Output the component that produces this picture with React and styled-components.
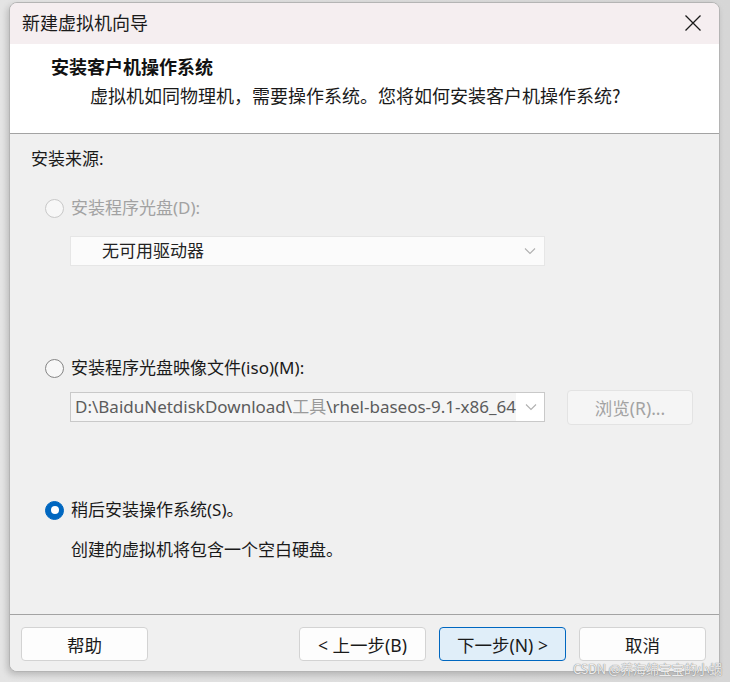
import React from "react";
import styled, { createGlobalStyle } from "styled-components";

const GlobalStyle = createGlobalStyle`
	body {
		margin: 0;
		background: #dcdcdc;
		font-family: "Noto Sans", "Noto Sans CJK SC", sans-serif;
	}
`;

const Page = styled.div`
	position: relative;
	width: 730px;
	height: 682px;
	padding: 2px 0 0 9px;
	box-sizing: border-box;
	background: linear-gradient(90deg, #e4e4e4 0%, #d6d6d6 100%);
	overflow: hidden;
`;

const Window = styled.div`
	width: 711px;
	height: 670px;
	box-sizing: border-box;
	display: flex;
	flex-direction: column;
	border: 1px solid #b4b4b4;
	border-radius: 8px;
	overflow: hidden;
	background: #f0f0f0;
	box-shadow: -2px 3px 6px rgba(0, 0, 0, 0.18);
`;

const TitleBar = styled.div`
	height: 41px;
	flex-shrink: 0;
	box-sizing: border-box;
	display: flex;
	align-items: center;
	justify-content: space-between;
	padding: 0 14px 4px 12px;
	background: #f5eef0;
	font-family: "Noto Sans CJK SC", sans-serif;
	font-size: 18px;
	color: #1a1a1a;
`;

const CloseButton = styled.svg`
	width: 18px;
	height: 18px;
	margin: 2px 3px 0 0;
`;

const Header = styled.div`
	height: 90px;
	flex-shrink: 0;
	box-sizing: border-box;
	padding: 10px 0 0 41px;
	background: #fff;
	border-bottom: 1px solid #a3a3a3;
`;

const HeaderTitle = styled.div`
	font-family: "Noto Sans CJK SC", sans-serif;
	font-size: 18px;
	font-weight: 700;
	line-height: 24px;
	color: #111;
`;

const HeaderSub = styled.div`
	margin: 5px 0 0 39px;
	font-family: "Noto Sans CJK SC", sans-serif;
	font-size: 18px;
	line-height: 24px;
	color: #1a1a1a;
`;

const Body = styled.div`
	flex: 1;
	display: flex;
	flex-direction: column;
	padding: 13px 0 0 21px;
	font-size: 17px;
	line-height: 24px;
	color: #1a1a1a;
`;

const SectionLabel = styled.div`
	height: 24px;
`;

const RadioRow = styled.label`
	display: flex;
	align-items: center;
	gap: 7px;
	height: 24px;
	margin: ${(p) => p.$top}px 0 0 14px;
	color: ${(p) => (p.$disabled ? "#a2a2a2" : "#1a1a1a")};
`;

const RadioDot = styled.span`
	width: 19px;
	height: 19px;
	box-sizing: border-box;
	border-radius: 50%;
	display: flex;
	align-items: center;
	justify-content: center;
	border: 1px solid
		${(p) => (p.$checked ? "#0067c0" : p.$disabled ? "#c8c8c8" : "#858585")};
	background: ${(p) => (p.$checked ? "#0067c0" : "#f7f7f7")};

	&::after {
		content: "";
		display: ${(p) => (p.$checked ? "block" : "none")};
		width: 8px;
		height: 8px;
		border-radius: 50%;
		background: #fff;
	}
`;

const Combo = styled.div`
	display: flex;
	align-items: center;
	width: 475px;
	height: 30px;
	box-sizing: border-box;
	margin: ${(p) => p.$top}px 0 0 ${(p) => p.$left}px;
	border: 1px solid ${(p) => (p.$disabled ? "#e6e6e6" : "#c9c9c9")};
	background: ${(p) => (p.$disabled ? "#fbfbfb" : "#fff")};
	overflow: hidden;
`;

const ComboText = styled.div`
	flex: 1;
	height: 100%;
	display: flex;
	align-items: center;
	padding-left: ${(p) => p.$pad}px;
	white-space: nowrap;
	color: ${(p) => p.$color};
	background: ${(p) => p.$bg || "transparent"};
`;

const Dim = styled.span`
	color: #9a9a9a;
`;

const Chevron = styled.svg`
	width: 12px;
	height: 8px;
	margin: 0 8px 0 9px;
	flex-shrink: 0;
`;

const FileRow = styled.div`
	display: flex;
	align-items: flex-start;
	gap: 22px;
	margin: 11px 0 0 39px;
`;

const Button = styled.button`
	width: 127px;
	height: 34px;
	box-sizing: border-box;
	border-radius: 4px;
	font-family: "Noto Sans", "Noto Sans CJK SC", sans-serif;
	font-size: 17.5px;
	padding: 0;
	color: ${(p) => (p.$disabled ? "#a3a3a3" : "#1a1a1a")};
	border: 1px solid
		${(p) => (p.$primary ? "#0067c0" : p.$disabled ? "#e3e3e3" : "#d3d3d3")};
	background: ${(p) =>
		p.$primary ? "#e0eef9" : p.$disabled ? "#f5f5f5" : "#fdfdfd"};
`;

const BrowseButton = styled(Button)`
	width: 126px;
	height: 35px;
	margin-top: -1px;
`;

const Description = styled.div`
	margin: 16px 0 0 40px;
	height: 24px;
`;

const Footer = styled.div`
	height: 57px;
	flex-shrink: 0;
	box-sizing: border-box;
	display: flex;
	align-items: flex-start;
	padding: 12px 13px 0 11px;
	gap: 13px;
	border-top: 1px solid #a3a3a3;
	background: #f0f0f0;
`;

const Spacer = styled.div`
	flex: 1;
`;

const Watermark = styled.div`
	position: absolute;
	right: 8px;
	bottom: 5px;
	font-family: "Noto Sans CJK SC", sans-serif;
	font-size: 13px;
	line-height: 16px;
	color: rgba(255, 255, 255, 0.85);
	text-shadow: 0 0 1px #8a8a8a, 0 0 1px #8a8a8a;
	letter-spacing: -0.3px;
`;

function ChevronIcon() {
	return (
		<Chevron viewBox="0 0 12 8">
			<path d="M1 1.5 L6 6.5 L11 1.5" fill="none" stroke="#b0b0b0" strokeWidth="1.1" />
		</Chevron>
	);
}

export default function App() {
	return (
		<Page>
			<GlobalStyle />
			<Window>
				<TitleBar>
					<span>新建虚拟机向导</span>
					<CloseButton viewBox="0 0 18 18">
						<path d="M1.5 1.5 L16.5 16.5 M16.5 1.5 L1.5 16.5" stroke="#1a1a1a" strokeWidth="1.3" />
					</CloseButton>
				</TitleBar>
				<Header>
					<HeaderTitle>安装客户机操作系统</HeaderTitle>
					<HeaderSub>虚拟机如同物理机，需要操作系统。您将如何安装客户机操作系统?</HeaderSub>
				</Header>
				<Body>
					<SectionLabel>安装来源:</SectionLabel>

					<RadioRow $top={25} $disabled>
						<RadioDot $disabled />
						安装程序光盘(D):
					</RadioRow>
					<Combo $top={16} $left={39} $disabled>
						<ComboText $pad={31} $color="#222">无可用驱动器</ComboText>
						<ChevronIcon />
					</Combo>

					<RadioRow $top={90}>
						<RadioDot />
						安装程序光盘映像文件(iso)(M):
					</RadioRow>
					<FileRow>
						<Combo $top={1} $left={0}>
							<ComboText $pad={4} $color="#5c5c5c" $bg="#f5f5f5">
								D:\BaiduNetdiskDownload\<Dim>工具</Dim>\rhel-baseos-9.1-x86_64
							</ComboText>
							<ChevronIcon />
						</Combo>
						<BrowseButton $disabled>浏览(R)...</BrowseButton>
					</FileRow>

					<RadioRow $top={73}>
						<RadioDot $checked />
						稍后安装操作系统(S)。
					</RadioRow>
					<Description>创建的虚拟机将包含一个空白硬盘。</Description>
				</Body>
				<Footer>
					<Button>帮助</Button>
					<Spacer />
					<Button>&lt; 上一步(B)</Button>
					<Button $primary>下一步(N) &gt;</Button>
					<Button>取消</Button>
				</Footer>
			</Window>
			<Watermark>CSDN @养海绵宝宝的小蜗</Watermark>
		</Page>
	);
}
